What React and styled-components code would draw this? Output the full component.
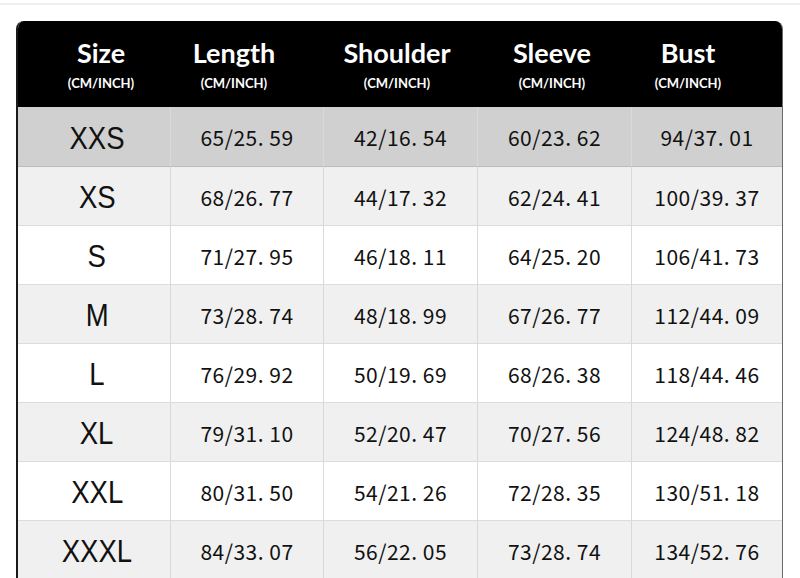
import React from "react";
import styled, { createGlobalStyle } from "styled-components";

const Global = createGlobalStyle`
  html, body { margin: 0; padding: 0; background: #ffffff; }
  body { width: 800px; height: 578px; overflow: hidden; }
`;

const Page = styled.div`
  width: 800px;
  height: 578px;
  overflow: hidden;
  padding-top: 3px;
  box-sizing: border-box;
`;

const TopRule = styled.div`
  height: 2px;
  background: #efefef;
`;

const Frame = styled.div`
  margin: 16px 0 0 16px;
  width: 767px;
  border-left: 2px solid #1a1a1a;
  border-right: 1px solid #6a6a6a;
  border-radius: 8px 8px 0 0;
  box-sizing: border-box;
  overflow: hidden;
`;

const HeadRow = styled.div`
  display: grid;
  grid-template-columns: 166px 100px 226px 84px 188px;
  height: 86px;
  background: #000;
`;

const Grid = styled.div`
  display: grid;
  grid-template-columns: 152px 153px 154px 154px 151px;
`;

const HeadCell = styled.div`
  display: flex;
  flex-direction: column;
  align-items: center;
  justify-content: center;
  color: #fff;
  font-family: Lato, "Open Sans", sans-serif;
  font-weight: 700;
  white-space: nowrap;
`;

const HeadTitle = styled.div`
  font-size: 27px;
  line-height: 30px;
`;

const HeadSub = styled.div`
  font-size: 13px;
  line-height: 16px;
  margin-top: 7px;
`;

const Cell = styled.div`
  height: ${(p) => (p.$first ? 60 : 59)}px;
  box-sizing: border-box;
  background: ${(p) => p.$bg};
  border-bottom: 1px solid ${(p) => (p.$first ? "#bdbdbd" : "#dcdcdc")};
  border-left: ${(p) => (p.$col === 0 ? "none" : "1px solid #d9d9d9")};
  display: flex;
  align-items: center;
  justify-content: center;
  padding-left: ${(p) => (p.$col === 0 ? 6 : 0)}px;
  color: #111;
`;

const SizeLabel = styled.span`
  display: inline-block;
  font-family: "Liberation Sans", Arial, sans-serif;
  font-size: 32px;
  line-height: 36px;
  transform: scaleX(0.86);
  padding-top: 2px;
`;

const Value = styled.span`
  font-family: "Noto Sans CJK SC", "Noto Sans", sans-serif;
  font-size: 21px;
  letter-spacing: 0.5px;
  white-space: pre;
  padding-top: 1px;
`;

const headers = ["Size", "Length", "Shoulder", "Sleeve", "Bust"];

const rows = [
  ["XXS", "65/25. 59", "42/16. 54", "60/23. 62", "94/37. 01"],
  ["XS", "68/26. 77", "44/17. 32", "62/24. 41", "100/39. 37"],
  ["S", "71/27. 95", "46/18. 11", "64/25. 20", "106/41. 73"],
  ["M", "73/28. 74", "48/18. 99", "67/26. 77", "112/44. 09"],
  ["L", "76/29. 92", "50/19. 69", "68/26. 38", "118/44. 46"],
  ["XL", "79/31. 10", "52/20. 47", "70/27. 56", "124/48. 82"],
  ["XXL", "80/31. 50", "54/21. 26", "72/28. 35", "130/51. 18"],
  ["XXXL", "84/33. 07", "56/22. 05", "73/28. 74", "134/52. 76"],
];

const rowBg = (i) => (i === 0 ? "#d0d0d0" : i % 2 === 1 ? "#f0f0f0" : "#ffffff");

export default function App() {
  return (
    <Page>
      <Global />
      <TopRule />
      <Frame>
        <HeadRow>
          {headers.map((h) => (
            <HeadCell key={h}>
              <HeadTitle>{h}</HeadTitle>
              <HeadSub>(CM/INCH)</HeadSub>
            </HeadCell>
          ))}
        </HeadRow>
        <Grid>
          {rows.map((r, i) =>
            r.map((v, c) => (
              <Cell key={`${i}-${c}`} $bg={rowBg(i)} $col={c} $first={i === 0}>
                {c === 0 ? <SizeLabel>{v}</SizeLabel> : <Value>{v}</Value>}
              </Cell>
            ))
          )}
        </Grid>
      </Frame>
    </Page>
  );
}
